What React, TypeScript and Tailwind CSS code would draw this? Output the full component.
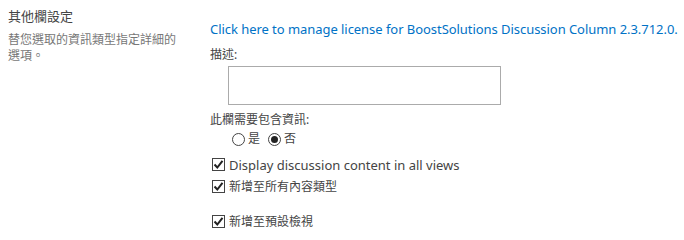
import React from "react";

const font = { fontFamily: '"Noto Sans", "Noto Sans CJK TC", sans-serif' };

function Check() {
  return (
    <span className="inline-flex h-[13px] w-[13px] items-center justify-center border border-[#444] bg-white">
      <svg width="11" height="11" viewBox="0 0 11 11">
        <path d="M1.5 5.5 L4.3 8.5 L9.5 1.8" fill="none" stroke="#222" strokeWidth="2" />
      </svg>
    </span>
  );
}

function Radio({ on }: { on?: boolean }) {
  return (
    <span className="inline-flex h-[13px] w-[13px] items-center justify-center rounded-full border border-[#444] bg-white">
      {on && <span className="h-[7px] w-[7px] rounded-full bg-[#222]" />}
    </span>
  );
}

export default function App() {
  return (
    <div className="flex h-[240px] w-[684px] bg-white text-[#444]" style={font}>
      <div className="w-[202px] pl-[8px] pt-[8px]">
        <div className="text-[13px] leading-[16px] text-[#444]">其他欄設定</div>
        <div className="mt-[8px] w-[170px] text-[12px] leading-[16px] text-[#777]">
          替您選取的資訊類型指定詳細的選項。
        </div>
      </div>
      <div className="flex flex-col pl-[8px] pt-[20px] text-[13px]">
        <a className="whitespace-nowrap text-[13px] leading-[18px] tracking-[-0.05px] text-[#0072c6]">
          Click here to manage license for BoostSolutions Discussion Column 2.3.712.0.
        </a>
        <div className="mt-[9px] text-[12px] leading-[16px]">描述:</div>
        <div className="ml-[18px] mt-[3px] h-[39px] w-[273px] border border-[#ababab] bg-white" />
        <div className="mt-[7px] text-[12px] leading-[16px]">此欄需要包含資訊:</div>
        <div className="ml-[22px] mt-[2px] flex items-center text-[12px] leading-[18px]">
          <Radio />
          <span className="ml-[3px]">是</span>
          <span className="ml-[8px]"><Radio on /></span>
          <span className="ml-[3px]">否</span>
        </div>
        <div className="mt-[7px] flex items-center leading-[20px]">
          <span className="ml-[2px]"><Check /></span>
          <span className="ml-[4px] text-[13px]">Display discussion content in all views</span>
        </div>
        <div className="mt-[2px] flex items-center leading-[20px]">
          <span className="ml-[2px]"><Check /></span>
          <span className="ml-[4px] text-[12px]">新增至所有內容類型</span>
        </div>
        <div className="mt-[15px] flex items-center leading-[20px]">
          <span className="ml-[2px]"><Check /></span>
          <span className="ml-[4px] text-[12px]">新增至預設檢視</span>
        </div>
      </div>
    </div>
  );
}
